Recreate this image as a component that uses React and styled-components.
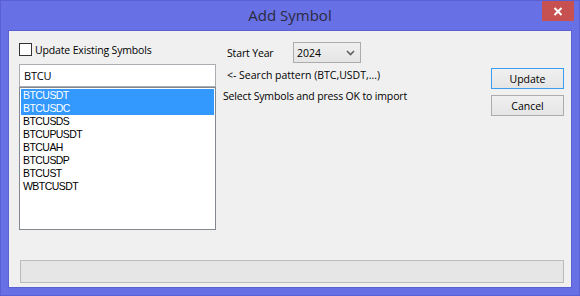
import React, { useState } from "react";
import styled, { createGlobalStyle } from "styled-components";

const GlobalStyle = createGlobalStyle`
  html, body {
    margin: 0;
    padding: 0;
    background: #ffffff;
  }
  body {
    font-family: "Open Sans", "Noto Sans", sans-serif;
  }
`;

const symbols = [
  "BTCUSDT",
  "BTCUSDC",
  "BTCUSDS",
  "BTCUPUSDT",
  "BTCUAH",
  "BTCUSDP",
  "BTCUST",
  "WBTCUSDT",
];

function AddSymbol() {
  const [selected, setSelected] = useState(["BTCUSDT", "BTCUSDC"]);
  const toggle = (s) =>
    setSelected((cur) =>
      cur.includes(s) ? cur.filter((x) => x !== s) : [...cur, s]
    );
  return (
    <Window>
      <TitleBar>
        <Title>Add Symbol</Title>
        <CloseButton>
          <svg width="10" height="9" viewBox="0 0 10 9">
            <path d="M1.5 1 L8.5 8 M8.5 1 L1.5 8" stroke="#fff" strokeWidth="2" />
          </svg>
        </CloseButton>
      </TitleBar>
      <Client>
        <Main>
          <LeftCol>
            <CheckRow>
              <CheckBox />
              <CheckLabel>Update Existing Symbols</CheckLabel>
            </CheckRow>
            <SearchInput defaultValue="BTCU" />
            <ListBox>
              {symbols.map((s) => (
                <ListItem
                  key={s}
                  $selected={selected.includes(s)}
                  onClick={() => toggle(s)}
                >
                  {s}
                </ListItem>
              ))}
            </ListBox>
          </LeftCol>
          <MidCol>
            <YearRow>
              <Label>Start Year</Label>
              <Combo>
                <span>2024</span>
                <svg width="9" height="6" viewBox="0 0 9 6">
                  <path d="M1 1 L4.5 4.5 L8 1" stroke="#606060" strokeWidth="1.6" fill="none" />
                </svg>
              </Combo>
            </YearRow>
            <Hint>&lt;- Search pattern (BTC,USDT,...)</Hint>
            <Info>Select Symbols and press OK to import</Info>
          </MidCol>
          <RightCol>
            <Button $default>Update</Button>
            <Button>Cancel</Button>
          </RightCol>
        </Main>
        <Progress />
      </Client>
    </Window>
  );
}

const Window = styled.div`
  width: 580px;
  height: 296px;
  box-sizing: border-box;
  background: #6870e5;
  border: 1px solid #5a60d2;
  display: flex;
  flex-direction: column;
`;

const TitleBar = styled.div`
  height: 29px;
  position: relative;
  display: flex;
  align-items: center;
  justify-content: center;
`;

const Title = styled.div`
  font-family: "Open Sans", "Noto Sans", sans-serif;
  font-size: 15px;
  color: #2b2b40;
  margin-top: -1px;
`;

const CloseButton = styled.div`
  position: absolute;
  right: 5px;
  top: 0;
  width: 32px;
  height: 20px;
  background: #c75050;
  display: flex;
  align-items: center;
  justify-content: center;
`;

const Client = styled.div`
  flex: 1;
  margin: 0 7px 7px 7px;
  background: #f0f0f0;
  border: 1px solid #5a60d2;
  display: flex;
  flex-direction: column;
  padding: 12px 7px 4px 10px;
`;

const Main = styled.div`
  display: flex;
  flex: 1;
`;

const LeftCol = styled.div`
  width: 197px;
  display: flex;
  flex-direction: column;
`;

const CheckRow = styled.label`
  display: flex;
  align-items: center;
  height: 13px;
  gap: 3px;
`;

const CheckBox = styled.span`
  width: 13px;
  height: 13px;
  box-sizing: border-box;
  background: #fff;
  border: 1px solid #333;
`;

const CheckLabel = styled.span`
  font-size: 10.5px;
  letter-spacing: -0.15px;
  color: #000;
`;

const SearchInput = styled.input`
  margin: 8px 0 0 0;
  height: 23px;
  box-sizing: border-box;
  border: 1px solid #abadb3;
  background: #fff;
  padding: 0 4px;
  font-family: "Open Sans", "Noto Sans", sans-serif;
  font-size: 11px;
  letter-spacing: -0.2px;
  color: #000;
  outline: none;
`;

const ListBox = styled.div`
  height: 143px;
  box-sizing: border-box;
  border: 1px solid #828790;
  background: #fff;
  padding: 1px;
`;

const ListItem = styled.div`
  height: 13px;
  line-height: 13px;
  padding-left: 2px;
  font-family: "Liberation Sans", Arial, sans-serif;
  font-size: 10.5px;
  letter-spacing: -0.55px;
  color: ${(p) => (p.$selected ? "#fff" : "#000")};
  background: ${(p) => (p.$selected ? "#3399ff" : "transparent")};
  cursor: default;
`;

const MidCol = styled.div`
  flex: 1;
  display: flex;
  flex-direction: column;
  padding-left: 7px;
`;

const YearRow = styled.div`
  display: flex;
  align-items: center;
  height: 21px;
  margin-top: -1px;
  padding-left: 4px;
`;

const Label = styled.span`
  font-size: 10.5px;
  letter-spacing: -0.15px;
  color: #000;
  width: 66px;
`;

const Combo = styled.div`
  width: 68px;
  height: 21px;
  box-sizing: border-box;
  border: 1px solid #acacac;
  background: linear-gradient(#f0f0f0, #e5e5e5);
  display: flex;
  align-items: center;
  justify-content: space-between;
  padding: 0 5px 0 3px;
  font-size: 10.5px;
  color: #000;
`;

const Hint = styled.div`
  font-size: 10.5px;
  color: #000;
  margin-top: 5px;
  padding-left: 4px;
`;

const Info = styled.div`
  font-size: 10.5px;
  letter-spacing: -0.15px;
  color: #000;
  margin-top: 7px;
`;

const RightCol = styled.div`
  width: 73px;
  display: flex;
  flex-direction: column;
  gap: 6px;
  padding-top: 25px;
`;

const Button = styled.button`
  height: 21px;
  box-sizing: border-box;
  border: 1px solid ${(p) => (p.$default ? "#3c9df0" : "#acacac")};
  background: linear-gradient(#f0f0f0, #e5e5e5);
  font-family: "Open Sans", "Noto Sans", sans-serif;
  font-size: 10.5px;
  color: #000;
  padding: 0;
`;

const Progress = styled.div`
  height: 23px;
  box-sizing: border-box;
  margin-left: 1px;
  border: 1px solid #bcbcbc;
  background: #e6e6e6;
`;

export default function App() {
  return (
    <>
      <GlobalStyle />
      <AddSymbol />
    </>
  );
}
